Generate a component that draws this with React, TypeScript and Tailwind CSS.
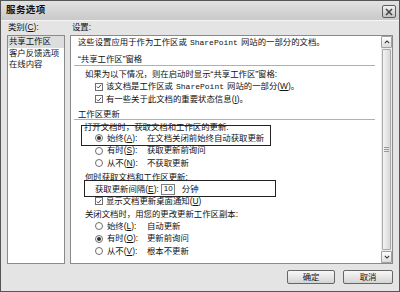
import React from 'react';

// underlined accelerator key, e.g. (A)
const Key = ({ k }: { k: string }) => (
  <span>
    (<span className="underline underline-offset-1">{k}</span>)
  </span>
);

const Check = () => (
  <span className="w-[8px] h-[8px] border border-[#6e6e6e] bg-white flex items-center justify-center shrink-0">
    <svg viewBox="0 0 8 8" className="w-[7px] h-[7px]">
      <path d="M1.2 4.1 L3.1 6 L6.8 1.6" fill="none" stroke="#333" strokeWidth="1.2" />
    </svg>
  </span>
);

const Radio = ({ on }: { on?: boolean }) => (
  <span className="w-[8px] h-[8px] rounded-full border border-[#6e6e6e] bg-white flex items-center justify-center shrink-0">
    {on && <span className="w-[4px] h-[4px] rounded-full bg-[#333]" />}
  </span>
);

const RadioRow = ({
  on,
  label,
  k,
  desc,
  h,
}: {
  on?: boolean;
  label: string;
  k: string;
  desc: string;
  h: string;
}) => (
  <div className={`flex items-center ml-[24px] ${h}`}>
    <Radio on={on} />
    <span className="ml-[4px] w-[40px] shrink-0">
      {label}
      <Key k={k} />:
    </span>
    <span>{desc}</span>
  </div>
);

const SP = () => <span className="font-['Liberation_Mono',monospace] text-[8px] mx-[3px]">SharePoint</span>;

const Arrow = ({ up }: { up?: boolean }) => (
  <div className="h-[12px] border border-[#a0a0a0] rounded-[1px] bg-gradient-to-b from-white to-[#dcdcdc] flex items-center justify-center shrink-0">
    <svg viewBox="0 0 7 5" className="w-[6px] h-[4px]">
      <path d={up ? 'M0.8 4 L3.5 1.2 L6.2 4' : 'M0.8 1 L3.5 3.8 L6.2 1'} fill="none" stroke="#333" strokeWidth="1.3" />
    </svg>
  </div>
);

export default function App() {
  return (
    <div className="w-[400px] h-[292px] overflow-hidden bg-[#e4e4e4] border border-[#555] flex flex-col text-[#111] text-[8.4px] font-['Liberation_Sans','Noto_Sans_CJK_SC',sans-serif]">
      {/* Title bar */}
      <div className="h-[20px] shrink-0 flex items-center justify-between pl-[5px] pr-[3px] bg-gradient-to-b from-[#e2e2e2] to-[#c9c9c9] border-b border-[#f5f5f5]">
        <span className="text-[9.5px] font-bold tracking-[0.4px]">服务选项</span>
        <div className="w-[14px] h-[13px] mt-[2px] border border-[#5e5e5e] rounded-[2px] bg-gradient-to-b from-[#f2f2f2] to-[#c2c2c2] flex items-center justify-center">
          <svg viewBox="0 0 8 8" className="w-[8px] h-[8px]">
            <path d="M1 1 L7 7 M7 1 L1 7" stroke="#444" strokeWidth="1.6" />
          </svg>
        </div>
      </div>

      {/* Body */}
      <div className="flex-1 flex flex-col px-[6px] pt-[1px]">
        <div className="flex h-[11px] leading-[11px]">
          <span className="w-[63px] pl-[1px]">
            类别<Key k="C" />:
          </span>
          <span className="pl-[2px]">设置:</span>
        </div>

        <div className="flex gap-[5px] h-[229px] mt-[2px]">
          {/* Category list */}
          <div className="w-[58px] border border-[#8a8a8a] bg-white leading-[11.5px]">
            <div className="h-[11.5px] pl-[1px] bg-[#dddddd]">共享工作区</div>
            <div className="h-[11.5px] pl-[1px]">客户反馈选项</div>
            <div className="h-[11.5px] pl-[1px]">在线内容</div>
          </div>

          {/* Settings panel */}
          <div className="flex-1 flex border border-[#8a8a8a] bg-white">
            <div className="relative flex-1 flex flex-col">
              <div className="h-[12px] flex items-center ml-[7px]">
                <span>
                  这些设置应用于作为工作区或<SP />网站的一部分的文档。
                </span>
              </div>

              <div className="mt-[6px] h-[12px] ml-[3px] mr-[6px] border-b border-[#b0b0b0] flex items-center pl-[4px]">
                “共享工作区”窗格
              </div>

              <div className="mt-[2px] h-[12px] flex items-center ml-[14px]">如果为以下情况，则在启动时显示“共享工作区”窗格:</div>
              <div className="h-[13px] flex items-center ml-[24px] gap-[3px]">
                <Check />
                <span>
                  该文档是工作区或<SP />网站的一部分<Key k="W" />。
                </span>
              </div>
              <div className="h-[12px] flex items-center ml-[24px] gap-[3px]">
                <Check />
                <span>
                  有一些关于此文档的重要状态信息<Key k="I" />。
                </span>
              </div>

              <div className="mt-[4px] h-[11px] ml-[3px] mr-[6px] border-b border-[#b0b0b0] flex items-center pl-[4px]">
                工作区更新
              </div>

              <div className="mt-[2px] h-[10px] flex items-center ml-[13px]">打开文档时，获取文档和工作区的更新:</div>
              <RadioRow on label="始终" k="A" desc="在文档关闭前始终自动获取更新" h="h-[12px]" />
              <RadioRow label="有时" k="S" desc="获取更新前询问" h="h-[13px]" />
              <RadioRow label="从不" k="N" desc="不获取更新" h="h-[12px]" />

              <div className="mt-[2px] h-[12px] flex items-center ml-[14px]">何时获取文档和工作区更新:</div>
              <div className="h-[12px] flex items-center ml-[24px]">
                <span>
                  获取更新间隔<Key k="E" />:
                </span>
                <span className="ml-[2px] w-[14px] h-[11px] border border-[#808080] bg-white flex items-center pl-[2px] text-[8px]">
                  10
                </span>
                <span className="ml-[7px]">分钟</span>
              </div>
              <div className="h-[12px] flex items-center ml-[24px] gap-[3px]">
                <Check />
                <span>
                  显示文档更新桌面通知<Key k="U" />
                </span>
              </div>

              <div className="mt-[1px] h-[12px] flex items-center ml-[14px]">关闭文档时，用您的更改更新工作区副本:</div>
              <RadioRow label="始终" k="L" desc="自动更新" h="h-[12px]" />
              <RadioRow on label="有时" k="O" desc="更新前询问" h="h-[13px]" />
              <RadioRow label="从不" k="V" desc="根本不更新" h="h-[12px]" />

              {/* highlight boxes */}
              <div className="absolute left-[10px] top-[89px] w-[190px] h-[21px] border border-[#222]" />
              <div className="absolute left-[13px] top-[144px] w-[192px] h-[17px] border border-[#222]" />
            </div>

            {/* Scrollbar */}
            <div className="w-[11px] flex flex-col bg-[#ececec]">
              <Arrow up />
              <div className="flex-1 my-[1px] mx-[1px] border border-[#aaa] rounded-[1px] bg-gradient-to-r from-[#f4f4f4] to-[#d8d8d8] flex items-center justify-center">
                <div className="flex flex-col gap-[1px]">
                  <span className="w-[5px] h-px bg-[#999]" />
                  <span className="w-[5px] h-px bg-[#999]" />
                  <span className="w-[5px] h-px bg-[#999]" />
                </div>
              </div>
              <Arrow />
            </div>
          </div>
        </div>

        {/* Buttons */}
        <div className="flex justify-end gap-[8px] mt-[6px]">
          <button className="w-[48px] h-[14px] border border-[#666] rounded-[2px] bg-gradient-to-b from-[#f8f8f8] to-[#d4d4d4] flex items-center justify-center text-[8.4px]">
            确定
          </button>
          <button className="w-[50px] h-[14px] border border-[#666] rounded-[2px] bg-gradient-to-b from-[#f8f8f8] to-[#d4d4d4] flex items-center justify-center text-[8.4px]">
            取消
          </button>
        </div>
      </div>
    </div>
  );
}
